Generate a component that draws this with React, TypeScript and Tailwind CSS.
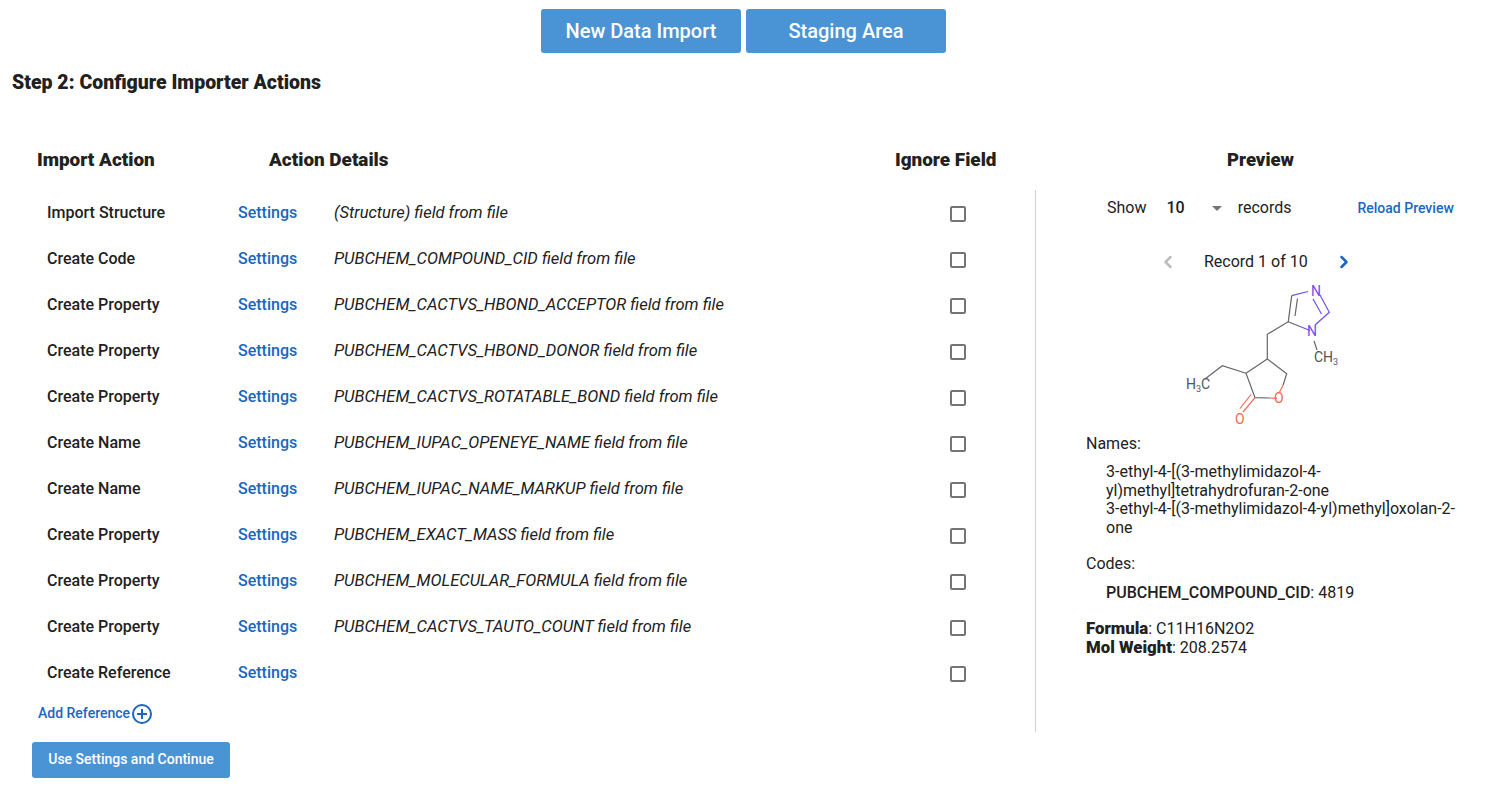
import { ChevronLeft, ChevronRight } from "lucide-react";

const actions = [
  { name: "Import Structure", field: "(Structure) field from file" },
  { name: "Create Code", field: "PUBCHEM_COMPOUND_CID field from file" },
  { name: "Create Property", field: "PUBCHEM_CACTVS_HBOND_ACCEPTOR field from file" },
  { name: "Create Property", field: "PUBCHEM_CACTVS_HBOND_DONOR field from file" },
  { name: "Create Property", field: "PUBCHEM_CACTVS_ROTATABLE_BOND field from file" },
  { name: "Create Name", field: "PUBCHEM_IUPAC_OPENEYE_NAME field from file" },
  { name: "Create Name", field: "PUBCHEM_IUPAC_NAME_MARKUP field from file" },
  { name: "Create Property", field: "PUBCHEM_EXACT_MASS field from file" },
  { name: "Create Property", field: "PUBCHEM_MOLECULAR_FORMULA field from file" },
  { name: "Create Property", field: "PUBCHEM_CACTVS_TAUTO_COUNT field from file" },
  { name: "Create Reference", field: "" },
];

function Molecule() {
  return (
    <svg width="190" height="155" viewBox="0 0 190 155" className="block" fill="none" strokeWidth="1.2">
      <g stroke="#666666">
        <path d="M131.7 20.7 128.3 46.7 107.3 59.3V84L126.7 98.7 123 110.5" />
        <path d="M137.5 23.5 135 41" />
        <path d="M107.3 84 86 98.3 95 122.7 110 123M86 98.3 62.3 90.7 45 104" />
        <path d="M128.3 46.7 140 51.5" />
        <path d="M154 66 157 75" />
      </g>
      <g stroke="#6a4ff0">
        <path d="M131.7 20.7 148 16.5" />
        <path d="M140 51.5 150 55.5M155 50 169.3 37.3 160 20" />
        <path d="M161.5 39 153 24" />
      </g>
      <g stroke="#ef6a55">
        <path d="M123 110.5 119.5 117M110 123 117 123.3" />
        <path d="M95 122.7 83 137M91 119.5 80 133.5" />
      </g>
      <g fontFamily="Roboto, sans-serif" fontSize="14">
        <text x="151" y="21" fill="#6a4ff0">N</text>
        <text x="147" y="61" fill="#6a4ff0">N</text>
        <text x="154" y="87" fill="#555555">CH<tspan fontSize="9" dy="3">3</tspan></text>
        <text x="26" y="114" fill="#555555">H<tspan fontSize="9" dy="3">3</tspan><tspan dy="-3">C</tspan></text>
        <text x="114" y="128" fill="#ef6a55">O</text>
        <text x="75" y="149" fill="#ef6a55">O</text>
      </g>
    </svg>
  );
}

export default function App() {
  return (
    <div className="h-[799px] w-[1487px] overflow-hidden bg-white font-['Roboto',sans-serif] text-[#212121]">
      <div className="flex justify-center gap-[5px] pt-[9px]">
        <button className="h-[44px] w-[200px] rounded-[3px] bg-[#4a93d4] text-[20px] font-medium text-white">New Data Import</button>
        <button className="h-[44px] w-[200px] rounded-[3px] bg-[#4a93d4] text-[20px] font-medium text-white">Staging Area</button>
      </div>

      <h2 className="mt-[18px] pl-3 text-[19.5px] leading-[24px] font-black">Step 2: Configure Importer Actions</h2>

      <div className="mt-[53px] flex">
        <div className="w-[1035px] shrink-0">
          <div className="flex h-[24px] items-center text-[18.9px] font-black">
            <span className="ml-[37px] w-[232px]">Import Action</span>
            <span className="w-[626px]">Action Details</span>
            <span>Ignore Field</span>
          </div>
          <div className="mt-[18px]">
            {actions.map((a, i) => (
              <div key={i} className="flex h-[46px] items-center">
                <span className="ml-[47px] w-[191px] text-[16px] font-medium">{a.name}</span>
                <a className="w-[96px] text-[16px] font-medium text-[#1a66c0]">Settings</a>
                <span className="w-[616px] text-[16.5px] italic">{a.field}</span>
                <span className="mt-[2px] h-[16px] w-[16px] rounded-[2px] border-2 border-[#757575]" />
              </div>
            ))}
          </div>
          <div className="mt-[6px] ml-[38px] flex items-center text-[14px] font-medium text-[#1a66c0]">
            Add Reference
            <svg width="20" height="20" viewBox="0 0 20 20" fill="none" stroke="#1a66c0" strokeWidth="2" className="mt-[2px] ml-[2px]">
              <circle cx="10" cy="10" r="9" />
              <path d="M5 10h10M10 5v10" />
            </svg>
          </div>
          <button className="mt-[18px] ml-[32px] h-[36px] w-[198px] rounded-[3px] bg-[#4a93d4] pb-px text-[14px] font-medium text-white">Use Settings and Continue</button>
        </div>

        <div className="w-[452px]">
          <div className="pl-[192px] text-[18.5px] leading-[24px] font-black">Preview</div>
          <div className="mt-[18px] h-[542px] border-l border-[#d0d0d0] pl-[50px] text-[16px]">
            <div className="flex h-[36px] items-center">
              <span className="ml-[21px]">Show</span>
              <span className="ml-[20px] font-medium">10</span>
              <span className="mt-[1px] ml-[27px] h-0 w-0 border-x-[5px] border-t-[5px] border-x-transparent border-t-[#757575]" />
              <span className="ml-[16px]">records</span>
              <a className="ml-[66px] text-[14px] font-medium text-[#1a66c0]">Reload Preview</a>
            </div>
            <div className="mt-[24px] flex h-[24px] items-center">
              <ChevronLeft size={20} strokeWidth={3} className="ml-[72px] text-[#bdbdbd]" />
              <span className="ml-[26px]">Record 1 of 10</span>
              <ChevronRight size={20} strokeWidth={3} className="ml-[26px] text-[#1a66c0]" />
            </div>
            <div className="ml-[74px] mt-[1px]">
              <Molecule />
            </div>
            <div className="mt-[5px] leading-[18px]">Names:</div>
            <div className="mt-[10px] w-[375px] pl-[20px] leading-[18.6px]">
              <div>3-ethyl-4-[(3-methylimidazol-4-yl)methyl]tetrahydrofuran-2-one</div>
              <div>3-ethyl-4-[(3-methylimidazol-4-yl)methyl]oxolan-2-one</div>
            </div>
            <div className="mt-[18px] leading-[18px]">Codes:</div>
            <div className="mt-[11px] pl-[20px] leading-[18px]"><span className="font-medium">PUBCHEM_COMPOUND_CID</span>: 4819</div>
            <div className="mt-[17px] leading-[19px]"><span className="text-[16.8px] font-black">Formula</span>: C11H16N2O2</div>
            <div className="leading-[19px]"><span className="text-[16.8px] font-black">Mol Weight</span>: 208.2574</div>
          </div>
        </div>
      </div>
    </div>
  );
}
